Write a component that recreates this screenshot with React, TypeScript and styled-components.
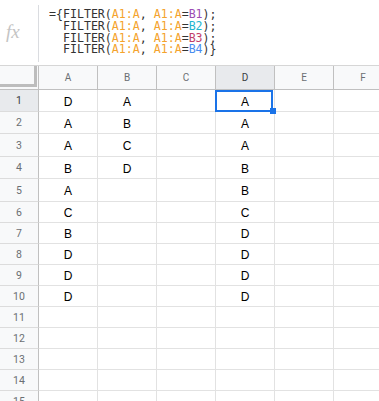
import styled, { createGlobalStyle } from 'styled-components'

const GlobalStyle = createGlobalStyle`
  html, body {
    margin: 0;
    padding: 0;
    background: #fff;
  }
  body {
    overflow: hidden;
  }
`

const Sheet = styled.div`
  width: 379px;
  height: 401px;
  overflow: hidden;
  background: #fff;
`

const FormulaBar = styled.div`
  display: flex;
  height: 65px;
  border-bottom: 1px solid #d6d6d6;
`

const FxLabel = styled.div`
  width: 38px;
  box-sizing: border-box;
  display: flex;
  align-items: center;
  padding: 0 0 2px 6px;
  font-family: 'Liberation Serif', serif;
  font-style: italic;
  font-size: 19px;
  color: #c4c4c4;
`

const Divider = styled.div`
  width: 1px;
  margin: 5px 0 3px;
  background: #dadce0;
`

const FormulaText = styled.pre`
  margin: 0;
  padding: 9px 0 0 10px;
  font-family: 'DejaVu Sans Mono', 'Liberation Mono', monospace;
  font-size: 11.6px;
  line-height: 11.8px;
  color: #333;
`

const Ref = styled.span<{ $color: string }>`
  color: ${(p) => p.$color};
`

const Grid = styled.div`
  display: grid;
  grid-template-columns: 39px repeat(6, 59px);
  grid-template-rows: 24px 22px 22px 23px 22px 23px repeat(10, 21px);
`

const CornerCell = styled.div`
  box-sizing: border-box;
  display: flex;
  padding: 0 1px 2px 0;
  background: #f8f9fa;
  border-right: 1px solid #c0c0c0;
  border-bottom: 1px solid #c0c0c0;
`

const CornerBars = styled.div`
  flex: 1;
  border-right: 3px solid #bdbdbd;
  border-bottom: 3px solid #bdbdbd;
`

const ColHeader = styled.div<{ $active?: boolean }>`
  box-sizing: border-box;
  display: flex;
  align-items: center;
  justify-content: center;
  background: ${(p) => (p.$active ? '#e8eaed' : '#f8f9fa')};
  color: ${(p) => (p.$active ? '#3c4043' : '#6b6f73')};
  border-right: 1px solid #c0c0c0;
  border-bottom: 1px solid #c0c0c0;
  font-family: Roboto, 'Liberation Sans', sans-serif;
  font-size: 10px;
`

const RowHeader = styled.div<{ $active?: boolean }>`
  box-sizing: border-box;
  display: flex;
  align-items: center;
  justify-content: center;
  background: ${(p) => (p.$active ? '#e8eaed' : '#f8f9fa')};
  color: ${(p) => (p.$active ? '#3c4043' : '#6b6f73')};
  border-right: 1px solid #c0c0c0;
  border-bottom: 1px solid #dcdcdc;
  font-family: Roboto, 'Liberation Sans', sans-serif;
  font-size: 10.5px;
`

const Cell = styled.div<{ $selected?: boolean }>`
  position: relative;
  box-sizing: border-box;
  display: flex;
  align-items: center;
  justify-content: center;
  padding-top: 2px;
  border-right: 1px solid #e2e2e2;
  border-bottom: 1px solid #e2e2e2;
  font-family: 'Liberation Sans', Arial, sans-serif;
  font-size: 12px;
  color: #000;

  ${(p) =>
    p.$selected &&
    `
    &::after {
      content: '';
      position: absolute;
      top: 0;
      left: -1px;
      right: 1px;
      bottom: -1px;
      border: 2px solid #1a73e8;
      pointer-events: none;
    }
  `}
`

const FillHandle = styled.span`
  position: absolute;
  right: -2px;
  bottom: -3px;
  width: 6px;
  height: 6px;
  background: #1a73e8;
  z-index: 1;
`

const columns = ['A', 'B', 'C', 'D', 'E', 'F']

const data: Record<string, string[]> = {
  A: ['D', 'A', 'A', 'B', 'A', 'C', 'B', 'D', 'D', 'D'],
  B: ['A', 'B', 'C', 'D'],
  D: ['A', 'A', 'A', 'B', 'B', 'C', 'D', 'D', 'D', 'D'],
}

const rangeColor = '#f4a32c'

const criteria = [
  { ref: 'B1', color: '#9c4db4' },
  { ref: 'B2', color: '#1fb6cf' },
  { ref: 'B3', color: '#c2406a' },
  { ref: 'B4', color: '#4a8df0' },
]

function App() {
  const rows = Array.from({ length: 15 }, (_, i) => i + 1)

  return (
    <Sheet>
      <GlobalStyle />
      <FormulaBar>
        <FxLabel>fx</FxLabel>
        <Divider />
        <FormulaText>
          {criteria.map((c, i) => (
            <span key={c.ref}>
              {i === 0 ? '={' : '  '}
              FILTER(<Ref $color={rangeColor}>A1:A</Ref>,{' '}
              <Ref $color={rangeColor}>A1:A</Ref>=<Ref $color={c.color}>{c.ref}</Ref>)
              {i === criteria.length - 1 ? '}' : ';\n'}
            </span>
          ))}
        </FormulaText>
      </FormulaBar>

      <Grid>
        <CornerCell>
          <CornerBars />
        </CornerCell>
        {columns.map((col) => (
          <ColHeader key={col} $active={col === 'D'}>
            {col}
          </ColHeader>
        ))}

        {rows.map((row) => (
          <RowGroup key={row} row={row} />
        ))}
      </Grid>
    </Sheet>
  )
}

function RowGroup({ row }: { row: number }) {
  return (
    <>
      <RowHeader $active={row === 1}>{row}</RowHeader>
      {columns.map((col) => {
        const selected = col === 'D' && row === 1
        return (
          <Cell key={col} $selected={selected}>
            {data[col]?.[row - 1] ?? ''}
            {selected && <FillHandle />}
          </Cell>
        )
      })}
    </>
  )
}

export default App
